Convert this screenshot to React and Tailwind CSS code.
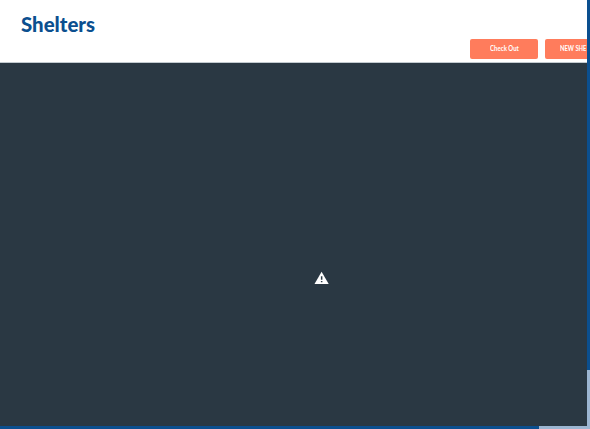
export default function App() {
  return (
    <div className="grid h-[429px] w-[590px] grid-cols-[587px_3px] grid-rows-[426px_3px] overflow-hidden bg-white font-['Lato','Liberation_Sans',sans-serif]">
      <div className="flex min-w-0 flex-col overflow-hidden">
        <header className="flex h-[63px] shrink-0 flex-col border-b border-[#c3cbd0] bg-white">
          <h1 className="mt-3 ml-[20.5px] h-[27px] text-[20px] leading-6 font-black text-[#0b4f8f]">
            <span className="inline-block origin-left scale-x-[1.02]">Shelters</span>
          </h1>
          <div className="ml-[470px] flex gap-[7px]">
            <button className="h-5 w-[68px] shrink-0 rounded-[2px] bg-[#ff7c5c] text-[6.5px] leading-5 font-bold text-white">
              <span className="inline-block scale-x-[0.93]">Check Out</span>
            </button>
            <button className="h-5 w-[42px] shrink-0 rounded-l-[2px] bg-[#ff7c5c] pl-[15px] text-left text-[6.5px] leading-5 font-bold whitespace-nowrap text-white">
              <span className="inline-block origin-left scale-x-[0.9]">NEW SHE</span>
            </button>
          </div>
        </header>
        <main className="flex grow justify-center bg-[#2a3843] pt-[208px] pl-[56px]">
          <svg width="16" height="14" viewBox="0 0 16 14" aria-label="Warning">
            <path d="M7.6 .8 14.7 13H.5Z" fill="#fff" />
            <path d="M6.9 5.2h1.5v3.6H6.9zM6.9 9.9h1.5v1.4H6.9z" fill="#2a3843" />
          </svg>
        </main>
      </div>
      <div className="flex flex-col bg-[#9cb6d2]">
        <div className="h-[370px] bg-[#0b4f8f]" />
      </div>
      <div className="flex bg-[#9cb6d2]">
        <div className="w-[539px] bg-[#0b4f8f]" />
      </div>
      <div className="bg-[#9cb6d2]" />
    </div>
  );
}
